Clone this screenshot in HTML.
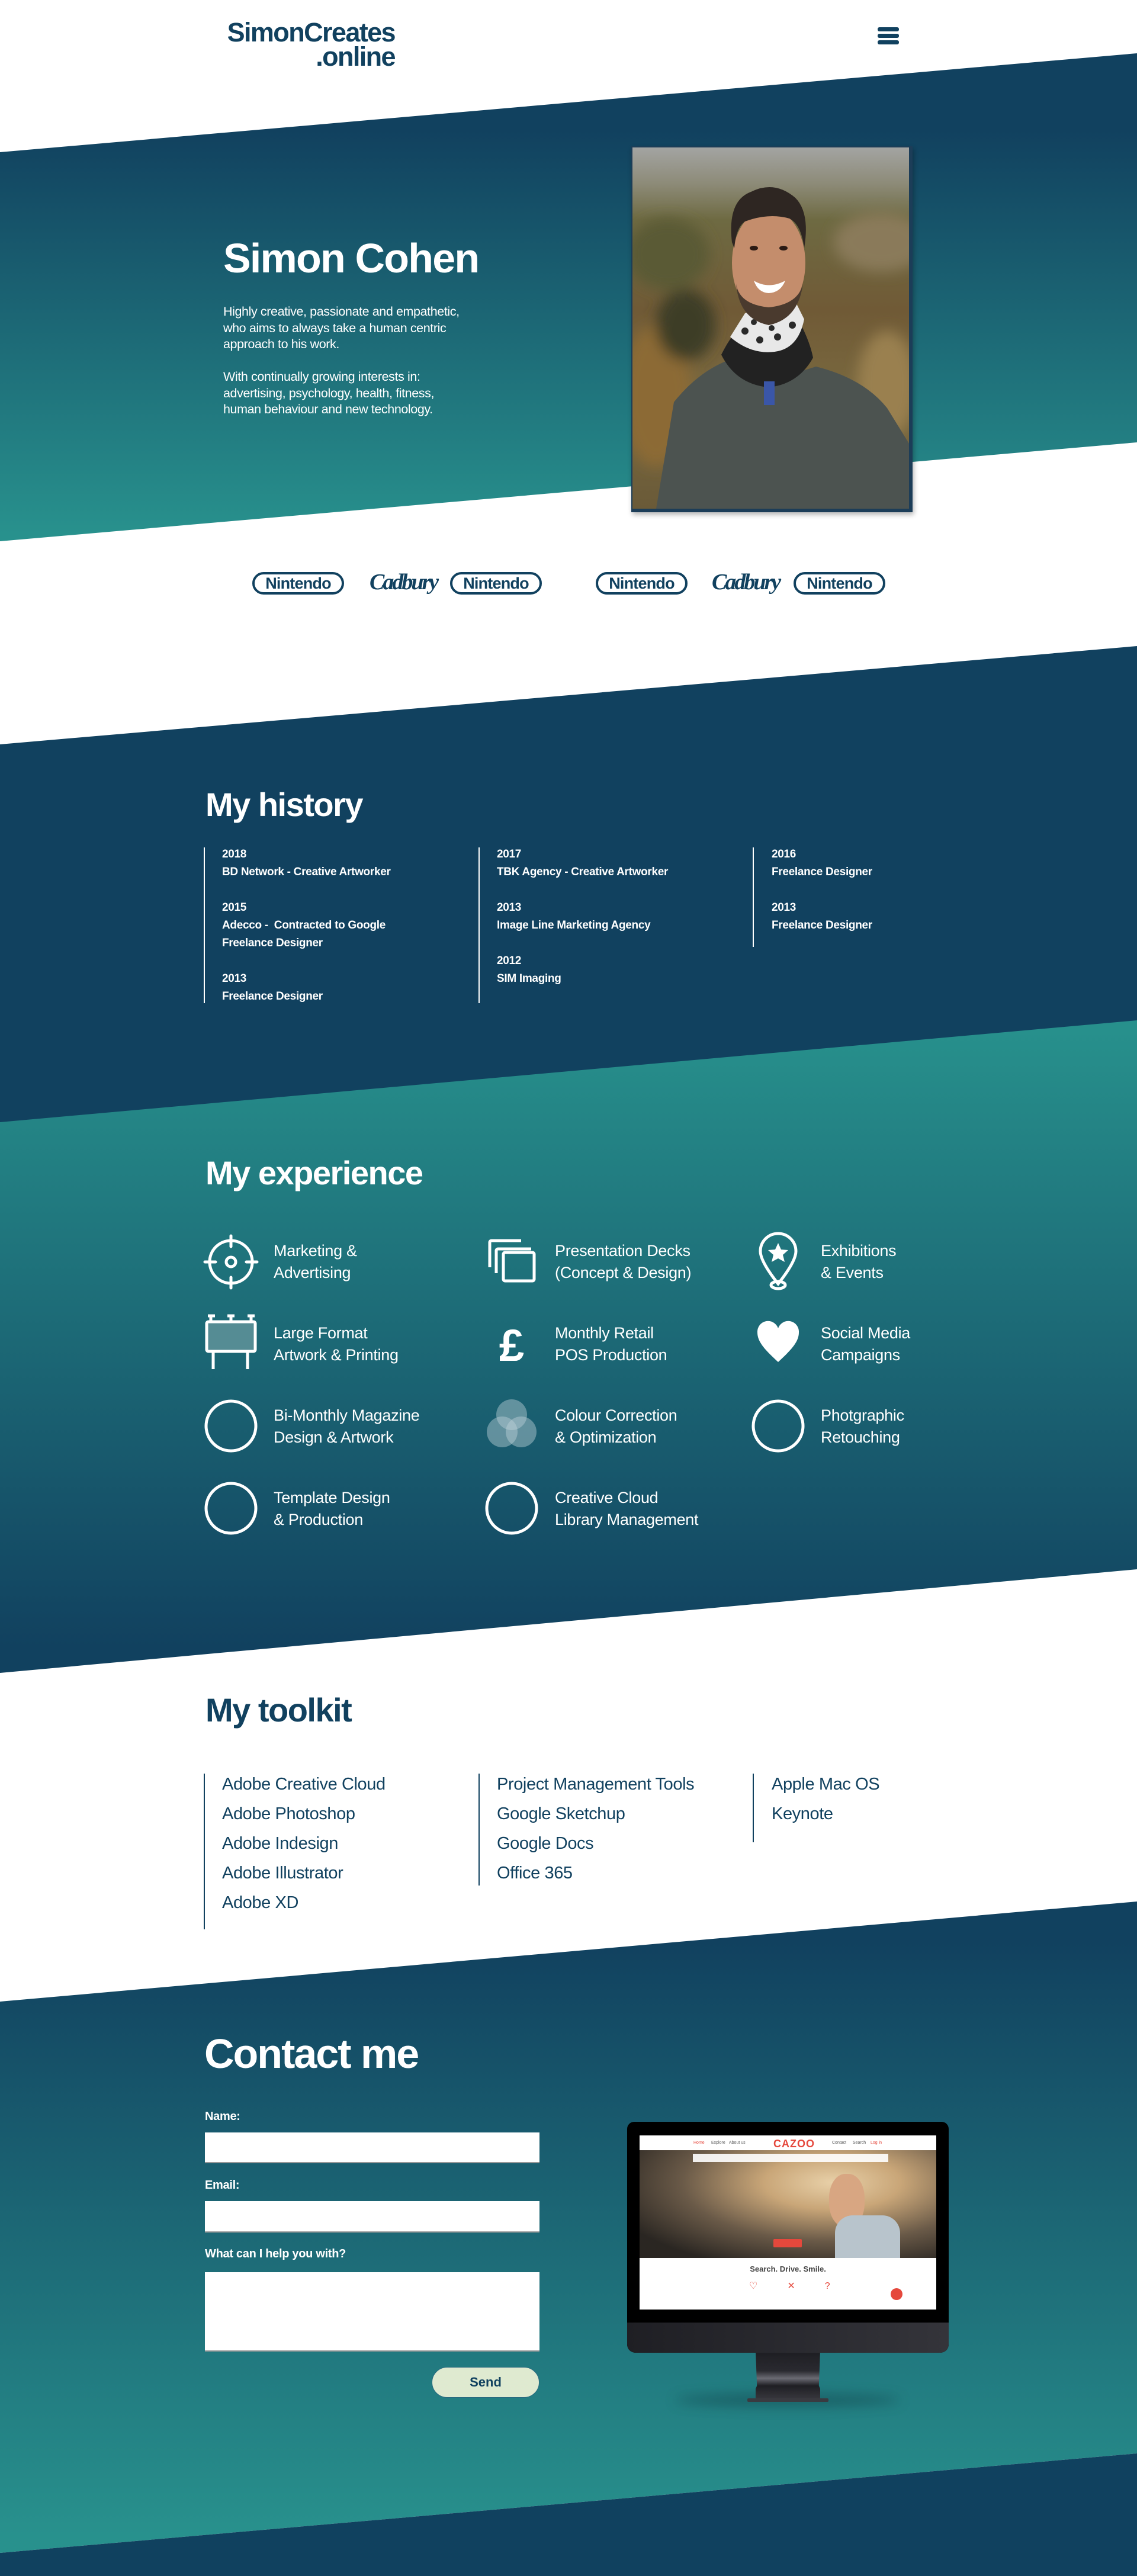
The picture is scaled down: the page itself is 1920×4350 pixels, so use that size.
<!DOCTYPE html>
<html><head><meta charset="utf-8">
<style>
*{margin:0;padding:0;box-sizing:border-box}
body{width:1920px;height:4350px;position:relative;background:#fff;font-family:"Liberation Sans",sans-serif;overflow:hidden}
.a{position:absolute;white-space:nowrap}
.w{color:#fff}
.n{color:#11415f}
.h2{font-weight:bold;letter-spacing:-1.5px;line-height:1}
.hl{position:absolute;width:2px}
.yr{position:absolute;font-size:19px;font-weight:bold;line-height:30px;color:#fff;letter-spacing:-.3px;white-space:nowrap}
.ex{position:absolute;font-size:27px;line-height:37px;color:#fff;white-space:nowrap;letter-spacing:-.3px}
.tk{position:absolute;font-size:29px;line-height:50px;color:#11415f;white-space:nowrap;letter-spacing:-.4px}
.pill{position:absolute;width:155px;height:38px;border:4px solid #11415f;border-radius:19px;color:#11415f;font-weight:bold;font-size:27px;line-height:30px;text-align:center;letter-spacing:-.8px}
.cad{position:absolute;font-family:"Liberation Serif",serif;font-style:italic;font-weight:bold;font-size:38px;color:#11415f;letter-spacing:-3px;line-height:40px}
.lbl{position:absolute;font-size:20px;font-weight:bold;color:#fff;line-height:30px;letter-spacing:-.3px}
.inp{position:absolute;background:#fff;border-bottom:2px solid #999}
</style></head><body>

<svg class="a" style="left:0;top:0" width="1920" height="4350" viewBox="0 0 1920 4350">
<defs>
<linearGradient id="g1" gradientUnits="userSpaceOnUse" x1="0" y1="220" x2="0" y2="900"><stop offset="0" stop-color="#11415f"/><stop offset="1" stop-color="#28918d"/></linearGradient>
<linearGradient id="g2" gradientUnits="userSpaceOnUse" x1="0" y1="1740" x2="0" y2="2780"><stop offset="0" stop-color="#27908c"/><stop offset="1" stop-color="#11415f"/></linearGradient>
<linearGradient id="g3" gradientUnits="userSpaceOnUse" x1="0" y1="3280" x2="0" y2="4280"><stop offset="0" stop-color="#11415f"/><stop offset="1" stop-color="#28918d"/></linearGradient>
</defs>
<polygon points="0,257 1920,90 1920,747 0,914" fill="url(#g1)"/>
<polygon points="0,1257 1920,1091 1920,1724 0,1896" fill="#11415f"/>
<polygon points="0,1895 1920,1723 1920,2650 0,2825" fill="url(#g2)"/>
<polygon points="0,3380 1920,3211 1920,4143 0,4311" fill="url(#g3)"/>
<polygon points="0,4311 1920,4143 1920,4350 0,4350" fill="#10415f"/>
</svg>

<!-- header -->
<div class="a n" style="left:367px;top:34px;font-size:45px;font-weight:bold;letter-spacing:-1.6px;line-height:41px;text-align:right;width:300px">SimonCreates<br>.online</div>
<div class="a" style="left:1482px;top:46px;width:36px;height:7px;background:#11415f;border-radius:3px"></div>
<div class="a" style="left:1482px;top:57px;width:36px;height:7px;background:#11415f;border-radius:3px"></div>
<div class="a" style="left:1482px;top:68px;width:36px;height:7px;background:#11415f;border-radius:3px"></div>

<!-- hero -->
<div class="a w" style="left:377px;top:401px;font-size:70px;font-weight:bold;letter-spacing:-1.8px;line-height:1">Simon Cohen</div>
<div class="a w" style="left:377px;top:513px;font-size:21.5px;line-height:27.5px;letter-spacing:-.4px">Highly creative, passionate and empathetic,<br>who aims to always take a human centric<br>approach to his work.<br><br>With continually growing interests in:<br>advertising, psychology, health, fitness,<br>human behaviour and new technology.</div>

<div class="a" style="left:1066px;top:247px;width:475px;height:618px;background:#1c3d58;box-shadow:2px 4px 8px rgba(0,0,0,.3)">
<svg width="467" height="610" style="position:absolute;left:2px;top:2px" viewBox="0 0 467 610">
<defs>
<linearGradient id="bg" x1="0" y1="0" x2="0" y2="1"><stop offset="0" stop-color="#a3a4a2"/><stop offset=".1" stop-color="#8d8b78"/><stop offset=".2" stop-color="#6e6a42"/><stop offset=".45" stop-color="#705a36"/><stop offset=".7" stop-color="#7a6a40"/><stop offset="1" stop-color="#6a5a38"/></linearGradient>
<filter id="bl"><feGaussianBlur stdDeviation="12"/></filter>
</defs>
<rect width="467" height="610" fill="url(#bg)"/>
<g filter="url(#bl)">
<ellipse cx="60" cy="180" rx="70" ry="60" fill="#5a5a36"/>
<ellipse cx="420" cy="160" rx="80" ry="50" fill="#8a7a5a"/>
<ellipse cx="40" cy="420" rx="60" ry="120" fill="#8c6a34"/>
<ellipse cx="430" cy="400" rx="50" ry="90" fill="#9a8050"/>
<ellipse cx="90" cy="300" rx="50" ry="60" fill="#3e3c26"/>
</g>
<path d="M40 610 L70 430 Q110 380 160 360 L230 395 L310 370 Q390 390 430 440 L467 500 L467 610Z" fill="#4c5350"/>
<path d="M150 350 Q175 300 195 300 L285 300 Q300 330 305 355 Q280 400 230 405 Q175 400 150 350Z" fill="#222"/>
<path d="M165 320 Q200 350 240 345 Q280 340 290 290 L270 250 L190 280Z" fill="#e8e8e8"/>
<g fill="#2a2a2a"><circle cx="190" cy="310" r="6"/><circle cx="215" cy="325" r="6"/><circle cx="245" cy="320" r="6"/><circle cx="270" cy="300" r="6"/><circle cx="205" cy="295" r="5"/><circle cx="260" cy="280" r="5"/><circle cx="235" cy="305" r="5"/></g>
<rect x="222" y="395" width="18" height="40" fill="#3a56a8"/>
<ellipse cx="230" cy="195" rx="62" ry="92" fill="#c48d6c"/>
<path d="M175 230 Q180 290 230 300 Q280 290 288 230 Q280 265 230 270 Q180 265 175 230Z" fill="#4a3a2e"/>
<path d="M168 160 Q160 90 200 75 Q240 55 275 85 Q300 110 290 170 Q285 130 265 120 Q230 110 190 125 Q175 135 172 170Z" fill="#2e2622"/>
<path d="M205 225 Q230 240 258 225 Q250 245 230 246 Q212 245 205 225Z" fill="#fff"/>
<ellipse cx="205" cy="170" rx="7" ry="4" fill="#2a1a14"/><ellipse cx="255" cy="170" rx="7" ry="4" fill="#2a1a14"/>
</svg></div>

<!-- logos -->
<div class="pill" style="left:426px;top:966px">Nintendo</div>
<div class="cad" style="left:624px;top:963px">Cadbury</div>
<div class="pill" style="left:760px;top:966px">Nintendo</div>
<div class="pill" style="left:1006px;top:966px">Nintendo</div>
<div class="cad" style="left:1202px;top:963px">Cadbury</div>
<div class="pill" style="left:1340px;top:966px">Nintendo</div>

<!-- history -->
<div class="a w h2" style="left:347px;top:1331px;font-size:56px">My history</div>
<div class="hl" style="left:344px;top:1431px;height:263px;background:#fff"></div>
<div class="hl" style="left:808px;top:1431px;height:263px;background:#fff"></div>
<div class="hl" style="left:1271px;top:1431px;height:168px;background:#fff"></div>
<div class="yr" style="left:375px;top:1428px">2018</div>
<div class="yr" style="left:375px;top:1458px">BD Network - Creative Artworker</div>
<div class="yr" style="left:375px;top:1518px">2015</div>
<div class="yr" style="left:375px;top:1548px">Adecco -&nbsp; Contracted to Google<br>Freelance Designer</div>
<div class="yr" style="left:375px;top:1638px">2013</div>
<div class="yr" style="left:375px;top:1668px">Freelance Designer</div>
<div class="yr" style="left:839px;top:1428px">2017</div>
<div class="yr" style="left:839px;top:1458px">TBK Agency - Creative Artworker</div>
<div class="yr" style="left:839px;top:1518px">2013</div>
<div class="yr" style="left:839px;top:1548px">Image Line Marketing Agency</div>
<div class="yr" style="left:839px;top:1608px">2012</div>
<div class="yr" style="left:839px;top:1638px">SIM Imaging</div>
<div class="yr" style="left:1303px;top:1428px">2016</div>
<div class="yr" style="left:1303px;top:1458px">Freelance Designer</div>
<div class="yr" style="left:1303px;top:1518px">2013</div>
<div class="yr" style="left:1303px;top:1548px">Freelance Designer</div>

<!-- experience -->
<div class="a w h2" style="left:347px;top:1953px;font-size:56px">My experience</div>
<svg class="a" style="left:0;top:0;overflow:visible" width="1920" height="4350">
<g fill="none" stroke="#fff" stroke-width="5">
<circle cx="390" cy="2131" r="36"/><circle cx="390" cy="2131" r="8"/>
<path d="M390 2087v18M390 2157v18M346 2131h18M416 2131h18" stroke-linecap="round"/>
<rect x="850" y="2115" width="52" height="48" rx="3"/>
<path d="M838 2150v-38a3 3 0 0 1 3-3h56" />
<path d="M827 2140v-42a3 3 0 0 1 3-3h50"/>
<path d="M1314 2168 Q1284 2130 1284 2113 A30 30 0 0 1 1344 2113 Q1344 2130 1314 2168Z"/>
<ellipse cx="1314" cy="2170" rx="12" ry="6"/>
<rect x="349" y="2232" width="82" height="50" rx="3" fill="#558c94"/>
<path d="M360 2282v30M418 2282v30M356 2232v-8M390 2232v-8M424 2232v-8M351 2222h12M384 2222h12M418 2222h12"/>
<circle cx="390" cy="2408" r="42"/>
<circle cx="1314" cy="2408" r="42"/>
<circle cx="390" cy="2547" r="42"/>
<circle cx="864" cy="2547" r="42"/>
</g>
<g fill="#fff">
<path d="M1314 2099 l5 11 12 1 -9 8 3 12 -11 -6 -11 6 3 -12 -9 -8 12 -1Z"/>
<path d="M1314 2300 C1290 2278 1279 2265 1279 2250 A18 18 0 0 1 1314 2243 A18 18 0 0 1 1349 2250 C1349 2265 1338 2278 1314 2300Z"/>
</g>
<text x="864" y="2298" font-family="Liberation Sans" font-weight="bold" font-size="76" fill="#fff" text-anchor="middle">£</text>
<g fill="#bcd0d8" fill-opacity=".45">
<circle cx="864" cy="2389" r="26"/><circle cx="848" cy="2418" r="26"/><circle cx="880" cy="2418" r="26"/>
</g>
</svg>
<div class="ex" style="left:462px;top:2094px">Marketing &amp;<br>Advertising</div>
<div class="ex" style="left:937px;top:2094px">Presentation Decks<br>(Concept &amp; Design)</div>
<div class="ex" style="left:1386px;top:2094px">Exhibitions<br>&amp; Events</div>
<div class="ex" style="left:462px;top:2233px">Large Format<br>Artwork &amp; Printing</div>
<div class="ex" style="left:937px;top:2233px">Monthly Retail<br>POS Production</div>
<div class="ex" style="left:1386px;top:2233px">Social Media<br>Campaigns</div>
<div class="ex" style="left:462px;top:2372px">Bi-Monthly Magazine<br>Design &amp; Artwork</div>
<div class="ex" style="left:937px;top:2372px">Colour Correction<br>&amp; Optimization</div>
<div class="ex" style="left:1386px;top:2372px">Photgraphic<br>Retouching</div>
<div class="ex" style="left:462px;top:2511px">Template Design<br>&amp; Production</div>
<div class="ex" style="left:937px;top:2511px">Creative Cloud<br>Library Management</div>

<!-- toolkit -->
<div class="a n h2" style="left:347px;top:2860px;font-size:56px">My toolkit</div>
<div class="hl" style="left:344px;top:2995px;height:263px;background:#11415f"></div>
<div class="hl" style="left:808px;top:2995px;height:189px;background:#11415f"></div>
<div class="hl" style="left:1271px;top:2995px;height:116px;background:#11415f"></div>
<div class="tk" style="left:375px;top:2988px">Adobe Creative Cloud<br>Adobe Photoshop<br>Adobe Indesign<br>Adobe Illustrator<br>Adobe XD</div>
<div class="tk" style="left:839px;top:2988px">Project Management Tools<br>Google Sketchup<br>Google Docs<br>Office 365</div>
<div class="tk" style="left:1303px;top:2988px">Apple Mac OS<br>Keynote</div>

<!-- contact -->
<div class="a w h2" style="left:345px;top:3433px;font-size:70px;letter-spacing:-2px">Contact me</div>
<div class="lbl" style="left:346px;top:3559px">Name:</div>
<div class="inp" style="left:346px;top:3601px;width:565px;height:52px"></div>
<div class="lbl" style="left:346px;top:3675px">Email:</div>
<div class="inp" style="left:346px;top:3717px;width:565px;height:53px"></div>
<div class="lbl" style="left:346px;top:3791px">What can I help you with?</div>
<div class="inp" style="left:346px;top:3837px;width:565px;height:134px"></div>
<div class="a" style="left:729px;top:3997px;width:182px;height:52px;background:#dfead0;border-radius:26px;border:1px solid #2a6a80;color:#11415f;font-weight:bold;font-size:22px;line-height:50px;text-align:center">Send</div>

<!-- monitor -->
<div class="a" style="left:1140px;top:4042px;width:380px;height:22px;border-radius:50%;background:rgba(10,40,50,.35);filter:blur(10px)"></div>
<div class="a" style="left:1276px;top:3970px;width:109px;height:84px;background:linear-gradient(#1d1d22,#2a2a30 40%,#6a6a72 55%,#1f1f24 70%,#3a3a40);clip-path:polygon(0 0,100% 0,98% 70%,108% 100%,-8% 100%,2% 70%)"></div>
<div class="a" style="left:1262px;top:4050px;width:137px;height:6px;background:#3a3a40;border-radius:2px"></div>
<div class="a" style="left:1059px;top:3583px;width:543px;height:390px;background:#000;border-radius:12px 12px 14px 14px;overflow:hidden">
<div style="position:absolute;left:0;top:339px;width:543px;height:51px;background:linear-gradient(90deg,#1f1f24,#34343a)"></div>
<div style="position:absolute;left:21px;top:23px;width:501px;height:294px;background:#fff;overflow:hidden">
<div style="position:absolute;left:0;top:0;width:501px;height:25px;font-size:7px;color:#e5483c">
<span style="position:absolute;left:91px;top:9px">Home</span><span style="position:absolute;left:121px;top:9px;color:#555">Explore</span><span style="position:absolute;left:151px;top:9px;color:#555">About us</span>
<span style="position:absolute;left:226px;top:4px;font-size:18px;font-weight:bold;letter-spacing:1px">CAZOO</span>
<span style="position:absolute;left:325px;top:9px;color:#555">Contact</span><span style="position:absolute;left:360px;top:9px;color:#555">Search</span><span style="position:absolute;left:390px;top:9px">Log in</span></div>
<div style="position:absolute;left:0;top:25px;width:501px;height:182px;background:radial-gradient(ellipse at 65% 30%,#e8d0a8 0,#c9a678 25%,#6a5a48 55%,#2a2622 85%)">
<div style="position:absolute;left:320px;top:40px;width:60px;height:90px;border-radius:45%;background:#d8a682"></div>
<div style="position:absolute;left:330px;top:110px;width:110px;height:72px;background:#b8c4cc;border-radius:30px 30px 0 0"></div>
<div style="position:absolute;left:90px;top:6px;width:330px;height:14px;background:rgba(255,255,255,.9)"></div>
<div style="position:absolute;left:226px;top:150px;width:48px;height:14px;background:#e5483c;border-radius:2px"></div></div>
<div style="position:absolute;left:0;top:218px;width:501px;text-align:center;font-size:13px;font-weight:bold;color:#444">Search. Drive. Smile.</div>
<div style="position:absolute;left:185px;top:244px;font-size:16px;color:#e5483c;letter-spacing:50px">♡✕?</div>
<div style="position:absolute;left:424px;top:258px;width:20px;height:20px;border-radius:50%;background:#e5483c"></div>
</div></div>
</body></html>
